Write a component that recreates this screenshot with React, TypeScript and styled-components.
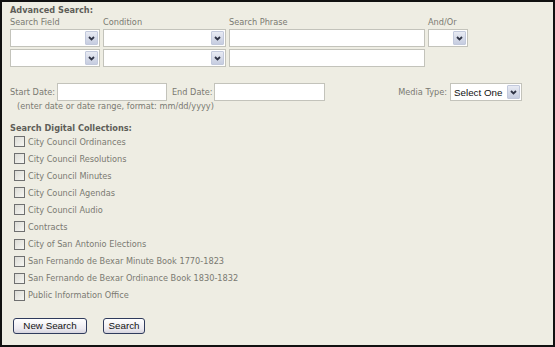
import styled, { createGlobalStyle } from 'styled-components';

const COLLECTIONS = [
  'City Council Ordinances',
  'City Council Resolutions',
  'City Council Minutes',
  'City Council Agendas',
  'City Council Audio',
  'Contracts',
  'City of San Antonio Elections',
  'San Fernando de Bexar Minute Book 1770-1823',
  'San Fernando de Bexar Ordinance Book 1830-1832',
  'Public Information Office',
];

const GlobalStyle = createGlobalStyle`
  html, body {
    margin: 0;
    padding: 0;
    background: #eeede3;
  }
  * {
    box-sizing: border-box;
  }
`;

function Chevron() {
  return (
    <svg width="7" height="5" viewBox="0 0 7 5">
      <polyline points="1,1 3.5,3.5 6,1" fill="none" stroke="#2f3446" strokeWidth="1.8" />
    </svg>
  );
}

function FakeSelect({ width, value }: { width: number; value?: string }) {
  return (
    <StyledSelect $width={width}>
      <StyledSelectValue>{value}</StyledSelectValue>
      <StyledArrow>
        <Chevron />
      </StyledArrow>
    </StyledSelect>
  );
}

export default function App(): JSX.Element {
  return (
    <>
      <GlobalStyle />
      <StyledFrame>
        <StyledHeading>Advanced Search:</StyledHeading>
        <StyledFieldGrid>
          <StyledLabel>Search Field</StyledLabel>
          <StyledLabel>Condition</StyledLabel>
          <StyledLabel>Search Phrase</StyledLabel>
          <StyledLabel>And/Or</StyledLabel>

          <FakeSelect width={90} />
          <FakeSelect width={123} />
          <StyledTextInput $width={196} />
          <FakeSelect width={40} />

          <FakeSelect width={90} />
          <FakeSelect width={123} />
          <StyledTextInput $width={196} />
        </StyledFieldGrid>

        <StyledDateRow>
          <StyledLabel>Start Date:</StyledLabel>
          <StyledTextInput $width={110} />
          <StyledLabel>End Date:</StyledLabel>
          <StyledTextInput $width={111} />
          <StyledMediaGroup>
            <StyledLabel>Media Type:</StyledLabel>
            <FakeSelect width={72} value="Select One" />
          </StyledMediaGroup>
        </StyledDateRow>
        <StyledHint>(enter date or date range, format: mm/dd/yyyy)</StyledHint>

        <StyledSubHeading>Search Digital Collections:</StyledSubHeading>
        <StyledCheckList>
          {COLLECTIONS.map((name) => (
            <StyledCheckRow key={name}>
              <StyledCheckBox />
              <StyledLabel>{name}</StyledLabel>
            </StyledCheckRow>
          ))}
        </StyledCheckList>

        <StyledButtonRow>
          <StyledButton type="button" $width={74}>
            New Search
          </StyledButton>
          <StyledButton type="button" $width={42}>
            Search
          </StyledButton>
        </StyledButtonRow>
      </StyledFrame>
    </>
  );
}

const StyledFrame = styled.div`
  width: 555px;
  height: 347px;
  border: 2px solid #111;
  background: #eeede3;
  padding: 3px 8px 0 8px;
  font-family: 'DejaVu Sans', Verdana, sans-serif;
  font-size: 8.2px;
  color: #7a7a72;
`;

const StyledHeading = styled.div`
  font-weight: bold;
  color: #5e5e58;
  line-height: 10px;
`;

const StyledSubHeading = styled(StyledHeading)`
  margin-top: 12px;
`;

const StyledLabel = styled.span`
  white-space: nowrap;
  line-height: 10px;
`;

const StyledFieldGrid = styled.div`
  display: grid;
  grid-template-columns: 90px 123px 196px 40px;
  column-gap: 3px;
  row-gap: 2px;
  align-items: end;
  margin-top: 2px;
`;

const StyledSelect = styled.div<{ $width: number }>`
  display: flex;
  align-items: center;
  justify-content: space-between;
  width: ${(p) => p.$width}px;
  height: 18px;
  padding: 1px;
  background: #fff;
  border: 1px solid #c3c3bb;
`;

const StyledSelectValue = styled.span`
  padding-left: 2px;
  font-family: 'Liberation Sans', Arial, sans-serif;
  font-size: 9.8px;
  color: #111;
`;

const StyledArrow = styled.span`
  display: flex;
  align-items: center;
  justify-content: center;
  width: 13px;
  height: 14px;
  border: 1px solid #c2c9dc;
  border-radius: 1px;
  background: linear-gradient(#e8ebf3, #c6cde0);
`;

const StyledTextInput = styled.div<{ $width: number }>`
  width: ${(p) => p.$width}px;
  height: 18px;
  background: #fff;
  border: 1px solid #c3c3bb;
`;

const StyledDateRow = styled.div`
  display: flex;
  align-items: center;
  gap: 2px;
  margin-top: 16px;

  & > ${StyledLabel}:nth-of-type(2) {
    margin-left: 3px;
  }
`;

const StyledMediaGroup = styled.div`
  display: flex;
  align-items: center;
  gap: 3px;
  margin-left: auto;
  margin-right: 23px;
`;

const StyledHint = styled.div`
  padding-left: 7px;
  line-height: 10px;
`;

const StyledCheckList = styled.div`
  display: flex;
  flex-direction: column;
  gap: 6.1px;
  margin-top: 3px;
  padding-left: 4px;
`;

const StyledCheckRow = styled.div`
  display: flex;
  align-items: center;
  gap: 3px;
  height: 11px;
`;

const StyledCheckBox = styled.span`
  width: 11px;
  height: 11px;
  border: 1px solid #6f7070;
  background: linear-gradient(135deg, #dcdcd6, #f6f6f2);
`;

const StyledButtonRow = styled.div`
  display: flex;
  gap: 16px;
  margin-top: 17px;
  padding-left: 3px;
`;

const StyledButton = styled.button<{ $width: number }>`
  width: ${(p) => p.$width}px;
  height: 16px;
  padding: 0;
  border: 1px solid #2f3b5c;
  border-radius: 3px;
  background: linear-gradient(#ffffff, #eceaf0 70%, #d6d4de);
  font-family: 'Liberation Sans', Arial, sans-serif;
  font-size: 9.8px;
  color: #111;
`;
